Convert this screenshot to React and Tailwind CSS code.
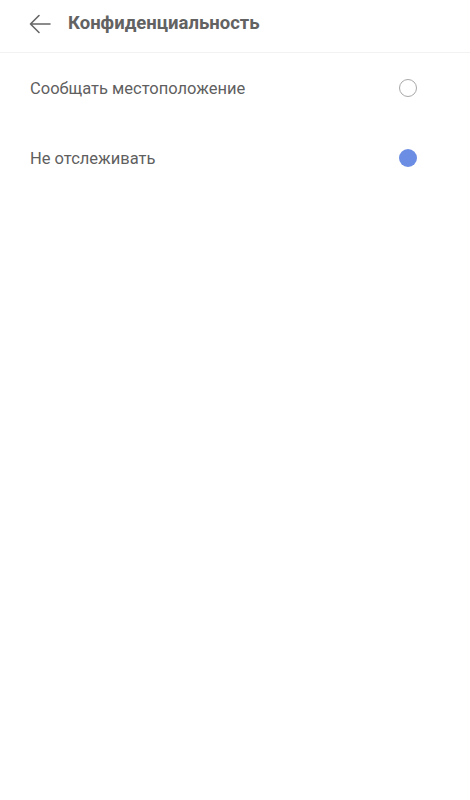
import React from "react";

export default function App() {
  return (
    <div className="w-[470px] h-[800px] bg-white" style={{ fontFamily: "Roboto, 'Noto Sans', sans-serif" }}>
      <div className="h-[53px] flex items-center pb-[4px] border-b border-[#f2f2f2]">
        <div className="w-[68px] flex items-center pl-[29px]">
          <svg width="22" height="20" viewBox="0 0 22 20" fill="none" stroke="#666" strokeWidth="1.6" strokeLinecap="round" strokeLinejoin="round">
            <path d="M21 10H1.5M10 1.5L1.5 10L10 18.5" />
          </svg>
        </div>
        <div className="text-[18.5px] font-bold text-[#626262]">Конфиденциальность</div>
      </div>
      <div>
        <div className="h-[70px] flex items-center justify-between pl-[30px] pr-[53px]">
          <span className="text-[16.5px] text-[#5f5f5f] pt-[3px]">Сообщать местоположение</span>
          <div className="w-[18px] h-[18px] rounded-full border border-[#a8a8a8]" />
        </div>
        <div className="h-[70px] flex items-center justify-between pl-[30px] pr-[53px]">
          <span className="text-[16.5px] text-[#5f5f5f] pt-[3px]">Не отслеживать</span>
          <div className="w-[18px] h-[18px] rounded-full bg-[#6b8de3]" />
        </div>
      </div>
    </div>
  );
}
